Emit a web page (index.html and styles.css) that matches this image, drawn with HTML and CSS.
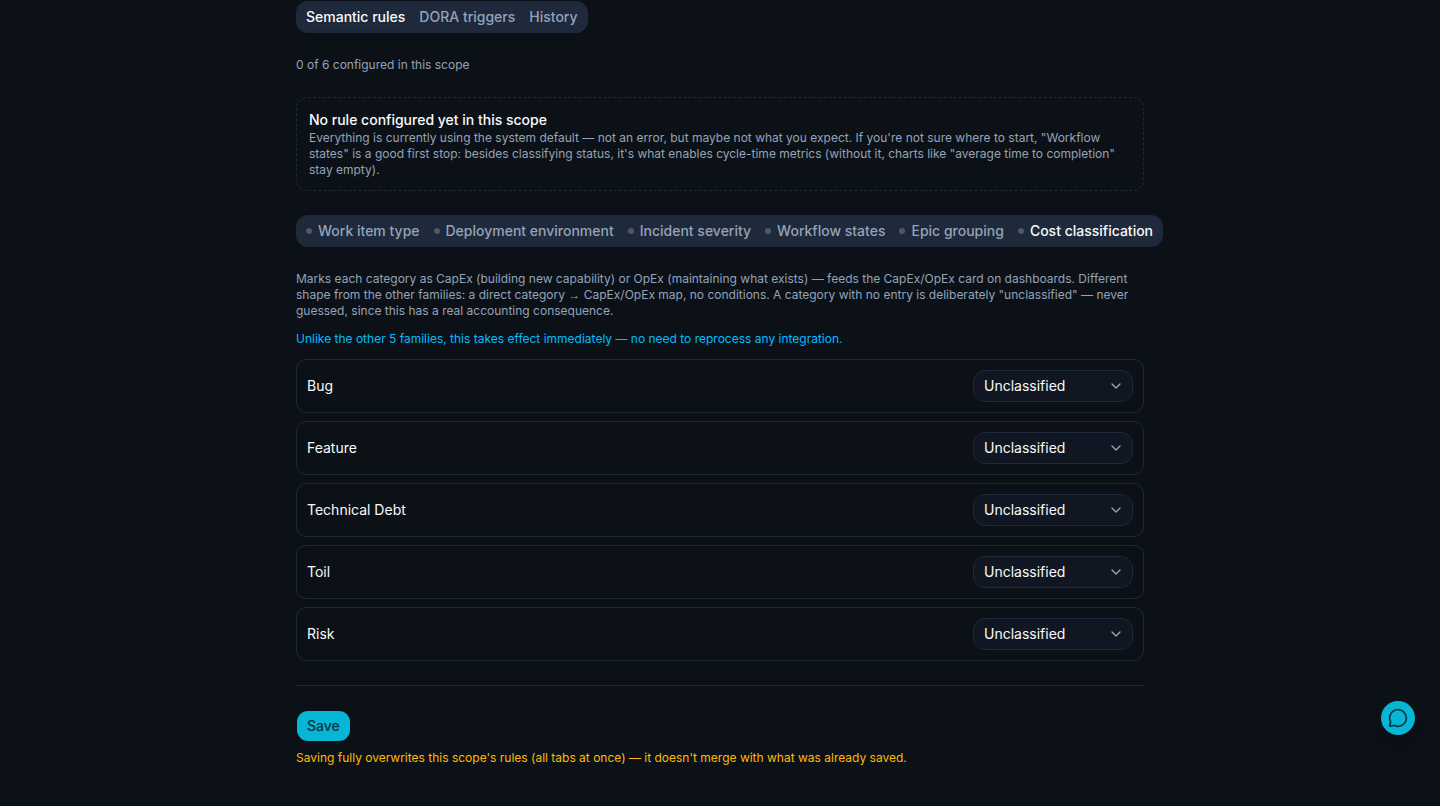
FILE: index.html
```html
<!DOCTYPE html>
<html lang="en">
<head>
<meta charset="utf-8">
<meta name="viewport" content="width=device-width, initial-scale=1">
<title>Semantic rules</title>
<link rel="stylesheet" href="styles.css">
</head>
<body>
<main class="page">
  <div class="tabs" role="tablist" aria-label="Settings">
    <button class="tab tab-active" role="tab" aria-selected="true">Semantic rules</button>
    <button class="tab" role="tab" aria-selected="false">DORA triggers</button>
    <button class="tab" role="tab" aria-selected="false">History</button>
  </div>

  <p class="note">0 of 6 configured in this scope</p>

  <section class="empty">
    <h2 class="empty-title">No rule configured yet in this scope</h2>
    <p class="note">Everything is currently using the system default — not an error, but maybe not what you expect. If you're not sure where to start, "Workflow states" is a good first stop: besides classifying status, it's what enables cycle-time metrics (without it, charts like "average time to completion" stay empty).</p>
  </section>

  <div class="tabs" role="tablist" aria-label="Rule families">
    <button class="tab" role="tab" aria-selected="false"><span class="dot"></span>Work item type</button>
    <button class="tab" role="tab" aria-selected="false"><span class="dot"></span>Deployment environment</button>
    <button class="tab" role="tab" aria-selected="false"><span class="dot"></span>Incident severity</button>
    <button class="tab" role="tab" aria-selected="false"><span class="dot"></span>Workflow states</button>
    <button class="tab" role="tab" aria-selected="false"><span class="dot"></span>Epic grouping</button>
    <button class="tab tab-active" role="tab" aria-selected="true"><span class="dot"></span>Cost classification</button>
  </div>

  <section class="family">
    <p class="note">Marks each category as CapEx (building new capability) or OpEx (maintaining what exists) — feeds the CapEx/OpEx card on dashboards. Different shape from the other families: a direct category <span class="arrow">→</span> CapEx/OpEx map, no conditions. A category with no entry is deliberately "unclassified" — never guessed, since this has a real accounting consequence.</p>
    <p class="note note-info">Unlike the other 5 families, this takes effect immediately — no need to reprocess any integration.</p>
    <div class="rows">
      <div class="row">
        <label class="row-label" for="bug">Bug</label>
        <div class="picker">
          <select class="select" id="bug"><option>Unclassified</option><option>CapEx</option><option>OpEx</option></select>
          <svg class="chevron" viewBox="0 0 24 24" aria-hidden="true"><path d="m6 9 6 6 6-6"/></svg>
        </div>
      </div>
      <div class="row">
        <label class="row-label" for="feature">Feature</label>
        <div class="picker">
          <select class="select" id="feature"><option>Unclassified</option><option>CapEx</option><option>OpEx</option></select>
          <svg class="chevron" viewBox="0 0 24 24" aria-hidden="true"><path d="m6 9 6 6 6-6"/></svg>
        </div>
      </div>
      <div class="row">
        <label class="row-label" for="debt">Technical Debt</label>
        <div class="picker">
          <select class="select" id="debt"><option>Unclassified</option><option>CapEx</option><option>OpEx</option></select>
          <svg class="chevron" viewBox="0 0 24 24" aria-hidden="true"><path d="m6 9 6 6 6-6"/></svg>
        </div>
      </div>
      <div class="row">
        <label class="row-label" for="toil">Toil</label>
        <div class="picker">
          <select class="select" id="toil"><option>Unclassified</option><option>CapEx</option><option>OpEx</option></select>
          <svg class="chevron" viewBox="0 0 24 24" aria-hidden="true"><path d="m6 9 6 6 6-6"/></svg>
        </div>
      </div>
      <div class="row">
        <label class="row-label" for="risk">Risk</label>
        <div class="picker">
          <select class="select" id="risk"><option>Unclassified</option><option>CapEx</option><option>OpEx</option></select>
          <svg class="chevron" viewBox="0 0 24 24" aria-hidden="true"><path d="m6 9 6 6 6-6"/></svg>
        </div>
      </div>
    </div>
  </section>

  <footer class="actions">
    <button class="save">Save</button>
    <p class="note note-warn">Saving fully overwrites this scope's rules (all tabs at once) — it doesn't merge with what was already saved.</p>
  </footer>
</main>

<button class="chat" aria-label="Open chat">
  <svg class="chat-icon" viewBox="0 0 24 24" aria-hidden="true"><path d="M2.992 16.342a2 2 0 0 1 .094 1.167l-1.065 3.29a1 1 0 0 0 1.236 1.168l3.413-.998a2 2 0 0 1 1.099.092 10 10 0 1 0-4.777-4.719"/></svg>
</button>
</body>
</html>
```
FILE: styles.css
```css
*,
*::before,
*::after {
  box-sizing: border-box;
}

body {
  margin: 0;
  background: #0c1117;
  color: #f8fafc;
  font-family: Inter, "Liberation Sans", sans-serif;
  font-size: 14px;
  line-height: 20px;
}

button,
select {
  font: inherit;
}

h2,
p {
  margin: 0;
}

.page {
  display: flex;
  flex-direction: column;
  gap: 24px;
  max-width: 896px;
  margin: 0 auto;
  padding: 1px 24px 40px;
}

.tabs {
  display: flex;
  width: max-content;
  height: 32px;
  padding: 3px;
  border-radius: 12px;
  background: #1e293b;
}

.tab {
  display: inline-flex;
  align-items: center;
  gap: 6px;
  padding: 0 6px;
  border: 1px solid transparent;
  border-radius: 10px;
  background: transparent;
  color: #94a3b8;
  font-weight: 500;
  white-space: nowrap;
}

.tab-active {
  color: #f8fafc;
  box-shadow: 0 1px 2px rgba(0, 0, 0, 0.1);
}

.dot {
  width: 6px;
  height: 6px;
  border-radius: 50%;
  background: #4d596b;
}

.note {
  color: #94a3b8;
  font-size: 12px;
  line-height: 16px;
}

.note-info {
  color: #00bcff;
}

.note-warn {
  color: #ffb900;
}

.arrow {
  font-family: "Liberation Sans", sans-serif;
  line-height: 1;
}

.empty {
  padding: 12px;
  border: 1px dashed #1e293b;
  border-radius: 12px;
}

.empty-title {
  font-size: 14px;
  font-weight: 500;
  line-height: 20px;
}

.family {
  display: flex;
  flex-direction: column;
  gap: 12px;
}

.rows {
  display: flex;
  flex-direction: column;
  gap: 8px;
}

.row {
  display: flex;
  align-items: center;
  justify-content: space-between;
  padding: 10px;
  border: 1px solid #1e293b;
  border-radius: 10px;
}

.picker {
  position: relative;
  width: 160px;
}

.select {
  display: block;
  width: 100%;
  height: 32px;
  padding: 0 32px 0 10px;
  border: 1px solid #1e293b;
  border-radius: 12px;
  background: #111722;
  color: #f8fafc;
  appearance: none;
}

.chevron {
  position: absolute;
  top: 8px;
  right: 9px;
  width: 16px;
  height: 16px;
  fill: none;
  stroke: #94a3b8;
  stroke-width: 2;
  stroke-linecap: round;
  stroke-linejoin: round;
  pointer-events: none;
}

.actions {
  display: flex;
  flex-direction: column;
  align-items: flex-start;
  gap: 8px;
  padding-top: 24px;
  border-top: 1px solid #1e293b;
}

.save {
  height: 32px;
  padding: 0 10px;
  border: 1px solid transparent;
  border-radius: 12px;
  background: #06b6d4;
  background-clip: padding-box;
  color: #083344;
  font-weight: 500;
}

.chat {
  position: fixed;
  right: 24px;
  bottom: 70px;
  display: grid;
  place-items: center;
  width: 36px;
  height: 36px;
  padding: 0;
  border: 1px solid transparent;
  border-radius: 50%;
  background: #06b6d4;
  background-clip: padding-box;
  box-shadow: 0 10px 15px -3px rgba(0, 0, 0, 0.1), 0 4px 6px -4px rgba(0, 0, 0, 0.1);
}

.chat-icon {
  width: 20px;
  height: 20px;
  fill: none;
  stroke: #083344;
  stroke-width: 2;
  stroke-linecap: round;
  stroke-linejoin: round;
}
```
